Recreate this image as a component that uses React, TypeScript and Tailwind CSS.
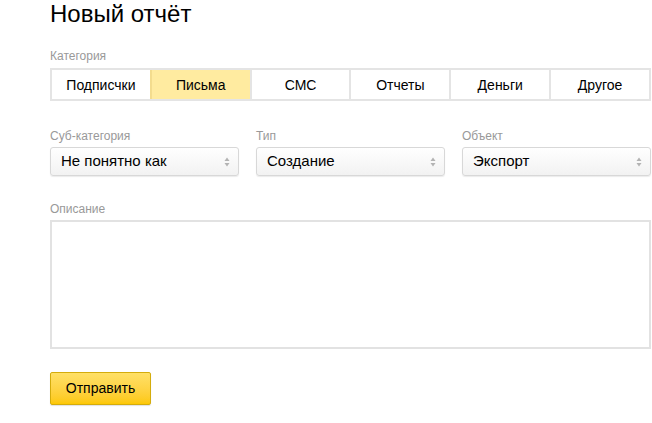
import { useState } from "react";

const TABS = ["Подписчки", "Письма", "СМС", "Отчеты", "Деньги", "Другое"];

const SELECTS = [
  { label: "Суб-категория", value: "Не понятно как" },
  { label: "Тип", value: "Создание" },
  { label: "Объект", value: "Экспорт" },
];

function Arrows() {
  return (
    <svg width="6" height="10" viewBox="0 0 6 10" className="shrink-0">
      <path d="M3 0.5 L5.5 4 H0.5 Z" fill="#b3b3b3" />
      <path d="M3 9.5 L5.5 6 H0.5 Z" fill="#b3b3b3" />
    </svg>
  );
}

export default function App() {
  const [active, setActive] = useState(1);

  return (
    <div
      className="w-[652px] h-[423px] bg-white overflow-hidden pl-[50px] pr-[1px] text-black"
      style={{ fontFamily: '"Liberation Sans", Arial, sans-serif' }}
    >
      <h1 className="text-[24px] leading-[28px] font-normal">Новый отчёт</h1>

      <div className="mt-[20px] text-[12px] leading-[16px] text-[#999]">Категория</div>
      <div className="mt-[4px] flex border-2 border-[#e4e4e4] h-[33px]">
        {TABS.map((tab, i) => (
          <button
            key={tab}
            onClick={() => setActive(i)}
            className={`flex-1 text-[14px] leading-none ${
              i > 0 ? "border-l-2" : ""
            } ${
              i === active
                ? "bg-[#ffeba0] border-[#f3dc8e]"
                : "bg-white border-[#e4e4e4]"
            }`}
          >
            {tab}
          </button>
        ))}
      </div>

      <div className="mt-[27px] grid grid-cols-3 gap-[17px]">
        {SELECTS.map((s) => (
          <div key={s.label}>
            <div className="text-[12px] leading-[16px] text-[#999]">{s.label}</div>
            <div className="mt-[3px] h-[29px] flex items-center justify-between pl-[10px] pr-[8px] border border-[#d8d8d8] rounded-[3px] bg-gradient-to-b from-white to-[#f2f2f2] shadow-[0_1px_1px_rgba(0,0,0,0.08)]">
              <span className="text-[15px]">{s.value}</span>
              <Arrows />
            </div>
          </div>
        ))}
      </div>

      <div className="mt-[25px] text-[12px] leading-[16px] text-[#999]">Описание</div>
      <textarea className="mt-[3px] block w-full h-[129px] border-2 border-[#e2e2e2] resize-none outline-none p-2 text-[14px]" />

      <button className="mt-[23px] w-[101px] h-[33px] text-[14px] rounded-[2px] border border-[#d4ac0c] bg-gradient-to-b from-[#ffe066] to-[#fdc800] shadow-[0_1px_1px_rgba(0,0,0,0.12)]">
        Отправить
      </button>
    </div>
  );
}
